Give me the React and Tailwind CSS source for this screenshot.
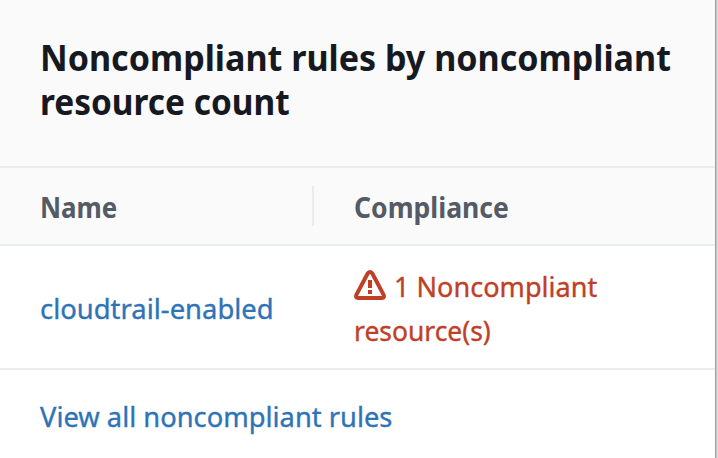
export default function App() {
  return (
    <div className="flex h-[458px] w-[718px] overflow-hidden bg-white font-['Noto_Sans',sans-serif]">
      <div className="flex w-[715px] flex-col overflow-hidden">
        <header className="h-[168px] border-b-2 border-[#eaeded] bg-[#fafafa] pl-10 pt-9 text-[36px] font-bold leading-[44px] text-[#16191f]">
          <h2 className="whitespace-nowrap">
            <span className="block origin-left scale-x-[0.946]">Noncompliant rules by noncompliant</span>
            <span className="block origin-left scale-x-[0.928]">resource count</span>
          </h2>
        </header>
        <div className="flex h-[78px] items-center border-b-2 border-[#eaeded] bg-[#fafafa] text-[28px] font-bold text-[#545b64]">
          <div className="flex h-10 w-[314px] items-center border-r-2 border-[#eaeded] pl-10 pt-0.5">
            <span className="origin-left scale-x-[0.925]">Name</span>
          </div>
          <div className="ml-10 origin-left scale-x-[0.948] pt-0.5">Compliance</div>
        </div>
        <div className="flex h-[124px] items-center border-b-2 border-[#eaeded] pt-0.5 text-[28px] leading-[44px] [-webkit-text-stroke:0.35px_currentColor]">
          <div className="w-[354px] pl-10 text-[#2e73b8]">
            <a className="inline-block origin-left scale-x-[0.979]">cloudtrail-enabled</a>
          </div>
          <div className="text-[#bf4026]">
            <div className="flex items-center gap-2">
              <svg className="-mt-1" width="32" height="32" viewBox="0 0 32 32" fill="none" stroke="currentColor" strokeWidth="4" strokeLinejoin="round"><path d="M13.8 5.3Q16 2.8 18.2 5.3L29.4 26.4Q31 30 27.8 30H4.2Q1 30 2.6 26.4Z" /><path d="M16 12v8M16 22v4" /></svg>
              <span className="origin-left scale-x-[0.967]">1 Noncompliant</span>
            </div>
            <div className="origin-left scale-x-[0.944]">resource(s)</div>
          </div>
        </div>
        <div className="flex flex-1 items-center pl-10 pt-[3px] text-[28px] text-[#2e73b8] [-webkit-text-stroke:0.35px_currentColor]">
          <a className="origin-left scale-x-[0.975]">View all noncompliant rules</a>
        </div>
      </div>
      <div className="w-px bg-[#9ba1a5]" />
      <div className="w-px bg-[#c4c6c8]" />
      <div className="w-px bg-[#dcdcdc]" />
    </div>
  );
}
